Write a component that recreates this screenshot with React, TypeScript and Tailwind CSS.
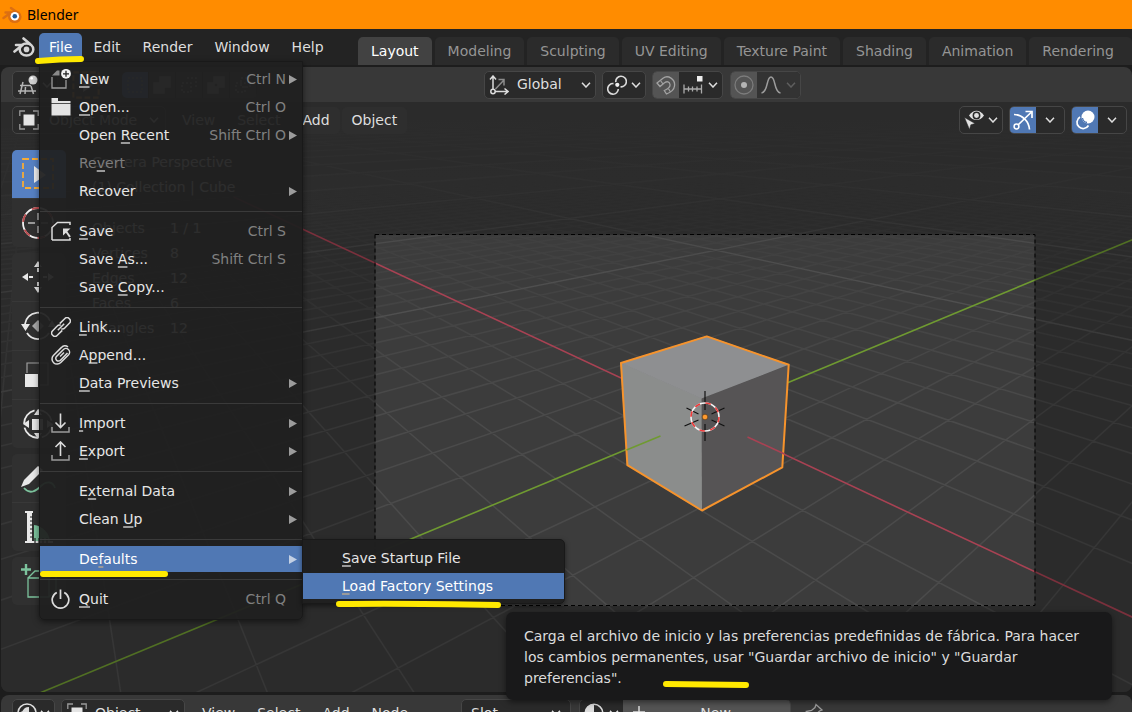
import type { ReactNode } from 'react';

/* ---------- viewport camera ---------- */

const CX = 704.5;
const CY = 420.5;
const FOCAL = 641;
const RIGHT = [0.6859, 0.7277, 0];
const UP = [-0.324, 0.3054, 0.8954];
const BACK = [0.6516, -0.6142, 0.4453];
const EYE = [7.3589, -6.9258, 4.9583];

const toCamera = (p: number[]) => {
  const d = p.map((v, i) => v - EYE[i]);
  const dot = (a: number[]) => a[0] * d[0] + a[1] * d[1] + a[2] * d[2];
  return [dot(RIGHT), dot(UP), -dot(BACK)];
};

const toScreen = ([x, y, depth]: number[]) => [CX + (FOCAL * x) / depth, CY - (FOCAL * y) / depth];

const lineBetween = (from: number[], to: number[]) => {
  let a = toCamera(from);
  let b = toCamera(to);
  const near = 1;
  if (a[2] < near && b[2] < near) return '';
  if (a[2] < near || b[2] < near) {
    const t = (near - a[2]) / (b[2] - a[2]);
    const cut = a.map((v, i) => v + (b[i] - v) * t);
    if (a[2] < near) a = cut;
    else b = cut;
  }
  const [x1, y1] = toScreen(a);
  const [x2, y2] = toScreen(b);
  return `M${x1.toFixed(1)} ${y1.toFixed(1)}L${x2.toFixed(1)} ${y2.toFixed(1)}`;
};

const gridPath = (count: number, step: number) => {
  const parts: string[] = [];
  const reach = count * step;
  for (let i = -count; i <= count; i++) {
    if (i === 0) continue;
    parts.push(lineBetween([i * step, -reach, 0], [i * step, reach, 0]));
    parts.push(lineBetween([-reach, i * step, 0], [reach, i * step, 0]));
  }
  return parts.join('');
};

const face = (points: number[][]) => points.map((p) => toScreen(toCamera(p)).map((v) => v.toFixed(1)).join(',')).join(' ');

const minorGrid = gridPath(50, 1);
const majorGrid = gridPath(20, 10);

const Scene = () => (
  <svg className="absolute inset-0 h-full w-full" viewBox="0 102 1132 590" preserveAspectRatio="xMidYMid slice" aria-hidden="true">
    <defs>
      <linearGradient id="fade" gradientUnits="userSpaceOnUse" x1="0" y1="102" x2="0" y2="420">
        <stop offset="0.1" stopColor="#525252" stopOpacity="0" />
        <stop offset="0.35" stopColor="#525252" stopOpacity="0.08" />
        <stop offset="0.55" stopColor="#525252" stopOpacity="0.28" />
        <stop offset="1" stopColor="#525252" stopOpacity="0.65" />
      </linearGradient>
      <linearGradient id="fadeMajor" gradientUnits="userSpaceOnUse" x1="0" y1="102" x2="0" y2="420">
        <stop offset="0.05" stopColor="#5a5a5a" stopOpacity="0" />
        <stop offset="0.3" stopColor="#5a5a5a" stopOpacity="0.18" />
        <stop offset="0.5" stopColor="#5a5a5a" stopOpacity="0.5" />
        <stop offset="1" stopColor="#5a5a5a" stopOpacity="0.6" />
      </linearGradient>
    </defs>
    <path d={minorGrid} stroke="url(#fade)" strokeWidth="1.5" fill="none" />
    <path d={majorGrid} stroke="url(#fadeMajor)" strokeWidth="1.3" fill="none" />
    <path d={lineBetween([-40, 0, 0], [40, 0, 0])} stroke="#a84253" strokeWidth="1.6" />
    <path d={lineBetween([0, -40, 0], [0, 40, 0])} stroke="#6f9a31" strokeWidth="1.6" />
    <path d="M0 102H1132V692H0ZM375 235V606H1034V235Z" fill="#000" fillOpacity="0.27" fillRule="evenodd" />
    <rect x="374.5" y="234.5" width="660" height="371" fill="none" stroke="#000" strokeDasharray="4 3" />

    {/* cube */}
    <g strokeWidth="0.8">
      <polygon points={face([[1, -1, 1], [-1, -1, 1], [-1, -1, -1], [1, -1, -1]])} fill="#8b8d8c" stroke="#8b8d8c" />
      <polygon points={face([[1, -1, 1], [1, 1, 1], [-1, 1, 1], [-1, -1, 1]])} fill="#8e8f91" stroke="#8e8f91" />
      <polygon points={face([[1, -1, 1], [1, 1, 1], [1, 1, -1], [1, -1, -1]])} fill="#565455" />
    </g>
    <polygon
      points={face([[-1, 1, 1], [1, 1, 1], [1, 1, -1], [1, -1, -1], [-1, -1, -1], [-1, -1, 1]])}
      fill="none"
      stroke="#f6932c"
      strokeWidth="2"
      strokeLinejoin="round"
    />
    <path d="M626 450L660 436" stroke="#6f9a31" strokeWidth="1.6" />
    <path d="M747 437L784 454" stroke="#a84253" strokeWidth="1.6" />

    {/* 3D cursor */}
    <path d="M704.5 391V410M704.5 424V441M686 408L698 414M684 426L698 420M724 408L711 414M724 426L711 420" stroke="#111" strokeWidth="1.2" />
    <circle cx="704.5" cy="417" r="14" fill="none" stroke="#f4f4f4" strokeWidth="1.6" />
    <circle cx="704.5" cy="417" r="14" fill="none" stroke="#ee3a3a" strokeWidth="1.6" strokeDasharray="5.5" />
    <circle cx="704.5" cy="417" r="2.8" fill="#ff9a2e" stroke="#4a2f10" strokeWidth="0.6" />
  </svg>
);

/* ---------- icons ---------- */

const Icon = ({ children, className = 'h-5 w-5' }: { children: ReactNode; className?: string }) => (
  <svg viewBox="0 0 20 20" className={`shrink-0 ${className}`} fill="none" stroke="#dcdcdc" strokeWidth="1.5" aria-hidden="true">
    {children}
  </svg>
);

const Chevron = ({ dim = false }: { dim?: boolean }) => (
  <svg viewBox="0 0 10 6" className="h-[6px] w-[10px] shrink-0" fill="none" stroke={dim ? '#5e5e5e' : '#dedede'} strokeWidth="1.5" aria-hidden="true">
    <path d="M1 .8L5 5L9 .8" />
  </svg>
);

const BlenderLogo = () => (
  <svg viewBox="0 0 22 20" className="h-5 w-[22px] shrink-0" fill="none" stroke="#d4d4d4" strokeLinecap="round" strokeLinejoin="round" aria-hidden="true">
    <path d="M1.500 14.500L9.500 8H3M10.500 1.500L17 7" strokeWidth="2.600" />
    <ellipse cx="13.500" cy="12.500" rx="6.800" ry="6.100" strokeWidth="2.500" />
    <circle cx="13.500" cy="12.400" r="2.800" fill="#d4d4d4" stroke="none" />
  </svg>
);

const NewIcon = () => (
  <Icon>
    <path d="M1 8V19H15V11" stroke="#9a9a9a" strokeWidth="1.3" />
    <path d="M1 6.5L6 1.5H8.5V6.5Z" fill="#8a8a8a" stroke="none" />
    <circle cx="15" cy="4.8" r="4.9" fill="#f0f0f0" stroke="none" />
    <path d="M15 1.8V7.8M12 4.8H18" stroke="#222" strokeWidth="1.3" />
  </Icon>
);
const FolderIcon = () => (
  <Icon>
    <path d="M.5 1H7V4H19.5V6.200H.5ZM.5 7H19.5V18.500H.5Z" fill="#e4e4e4" stroke="none" />
  </Icon>
);
const SaveIcon = () => (
  <Icon>
    <path d="M1 19V6.500L6.500 1.500H19V4M1 19H19V17" strokeWidth="1.500" />
    <path d="M12 7.500H19.500L12 14.500Z" fill="#dcdcdc" stroke="none" />
    <path d="M14.500 9.500L19 16" strokeWidth="2" />
  </Icon>
);
const LinkIcon = () => (
  <Icon>
    <g transform="rotate(-45 10 10)">
      <path d="M8.500 13.300H1.500A3.300 3.300 0 0 1 1.500 6.700H8A3 3 0 0 1 11 8.500" />
      <path d="M11.500 6.700H18.500A3.300 3.300 0 0 1 18.500 13.300H12A3 3 0 0 1 9 11.500" />
      <path d="M5.500 10H14.500" />
    </g>
  </Icon>
);
const ClipIcon = () => (
  <Icon>
    <path d="M16.500 8L9.500 15.200A2.700 2.700 0 0 1 5.500 11.500L12.200 4.700A3.600 3.600 0 0 1 17.600 9.700L9.800 17.500A5 5 0 0 1 2.400 10.500L10.500 2.400A4.500 4.500 0 0 1 17 2" />
    <path d="M9 11.500L13 7.500" />
  </Icon>
);
const ImportIcon = () => (
  <Icon>
    <path d="M1 14V19H18V14" stroke="#9a9a9a" />
    <path d="M9.500 .5V14M4.500 9.500L9.500 14.500L14.500 9.500" strokeWidth="1.600" />
  </Icon>
);
const ExportIcon = () => (
  <Icon>
    <path d="M1 14V19H18V14" stroke="#9a9a9a" />
    <path d="M9.500 15V1.500M4.500 6L9.500 1L14.500 6" strokeWidth="1.600" />
  </Icon>
);
const QuitIcon = () => (
  <Icon>
    <path d="M5.800 3.400A8.300 8.300 0 1 0 13.200 3.400M9.500 .5V10" strokeWidth="1.700" />
  </Icon>
);

const ViewportIcon = () => (
  <Icon>
    <path d="M5 7L2 19M13 11L15.500 19M2 10.500H13M0 16H18M7.500 12L7 19" stroke="#b4b4b4" />
    <circle cx="15" cy="5" r="4.500" fill="#cfcfcf" stroke="none" />
    <circle cx="13.700" cy="3.300" r="1.300" fill="#fff" stroke="none" />
  </Icon>
);
const ObjectModeIcon = () => (
  <Icon>
    <path d="M.8 6V1H6M14 1H19.200V6M19.200 14V19H14M6 19H.8V14" stroke="#9a9a9a" strokeWidth="1.300" />
    <rect x="4.500" y="4.500" width="11" height="11" fill="#e4e4e4" stroke="none" />
  </Icon>
);
const AxesIcon = () => (
  <Icon>
    <path d="M4 14V1.500M1 4.500L4 1L7 4.500M6 16.500H18.500M15.500 13.500L19 16.500L15.500 19.500" />
    <circle cx="4" cy="16.500" r="2.200" />
    <path d="M6.500 14L14.500 5.500M9.500 4.500H15V10.500" stroke="#8c8c8c" />
  </Icon>
);
const PivotIcon = () => (
  <Icon>
    <path d="M8.800 7.200A5.300 5.300 0 1 1 13.500 11.800M6.500 8.600A5.300 5.300 0 1 0 11.300 14" strokeWidth="1.600" />
    <circle cx="10.300" cy="9.800" r="2.100" fill="#f2f2f2" stroke="none" />
  </Icon>
);
const MagnetIcon = () => (
  <Icon>
    <path
      d="M1 8L7 3.200C12 -.5 19.500 4 18.500 11C18 16 13 18 10.500 19L8.300 15.500C12 14 14.500 12.500 14 9.500C13.500 6.500 11 6 8.500 7.800L4 11.500Z"
      stroke="#a2a2a2"
      strokeWidth="1.300"
    />
    <path d="M4.500 5.500L7 9M12.500 13.800L14.500 17" stroke="#a2a2a2" strokeWidth="1.200" />
  </Icon>
);
const IncrementIcon = () => (
  <Icon>
    <path d="M1 9.500V18.500M18.500 9.500V18.500M1 14H18.500M5.500 11.500V16.500M9.500 11.500V16.500M14 11.500V16.500" stroke="#ababab" strokeWidth="1.300" />
    <rect x="14" y="1" width="5.500" height="5.500" fill="#eee" stroke="none" />
  </Icon>
);
const ProportionalIcon = () => (
  <Icon>
    <circle cx="10" cy="10" r="9" stroke="#7c7c7c" strokeWidth="1.300" />
    <circle cx="10" cy="10" r="3" fill="#b4b4b4" stroke="none" />
  </Icon>
);
const FalloffIcon = () => (
  <Icon>
    <path d="M.5 18C7.500 17 5 2 10 2S12.500 17 19.500 18" stroke="#9c9c9c" />
  </Icon>
);
const VisibilityIcon = () => (
  <Icon>
    <path d="M5 5.500C9 -.8 16 -.8 20 5.500C16 11.500 9 11.500 5 5.500Z" fill="#e2e2e2" stroke="none" />
    <circle cx="12.500" cy="5.500" r="3.200" fill="#e2e2e2" stroke="#2a2a2a" strokeWidth="1.500" />
    <path d="M.5 7.500L11 13.500L6.800 14.800L5.500 19.500Z" fill="#e2e2e2" stroke="#2a2a2a" strokeWidth=".5" />
  </Icon>
);
const GizmoIcon = () => (
  <Icon>
    <g stroke="#fff">
      <path d="M1 4.500C9 4.500 16 11 16.500 19.500M5.500 14.500L18 2.500M12.500 1.500H19V8" strokeWidth="1.700" />
      <circle cx="3.500" cy="16.500" r="2.400" />
    </g>
  </Icon>
);
const OverlayIcon = () => (
  <Icon>
    <circle cx="13" cy="7" r="6.500" fill="#fff" stroke="none" />
    <path d="M5 7A6.200 6.200 0 1 0 13.500 15.500" stroke="#fff" strokeWidth="1.700" />
    <path d="M7.500 8A5.500 5.500 0 0 0 12 12.500" stroke="#5078b4" strokeWidth="1.300" />
  </Icon>
);
const ShaderIcon = () => (
  <Icon>
    <circle cx="10" cy="10" r="9" />
    <path d="M3 15C3 8 7 4 12 4V9C8 10 8 14 8 18Z" fill="#dcdcdc" stroke="none" />
    <path d="M4.500 8L7 4.500" stroke="#2c2c2c" />
  </Icon>
);
const MaterialIcon = () => (
  <Icon>
    <circle cx="10" cy="10" r="8.700" />
    <path d="M10 1A9 9 0 0 0 10 19Z" fill="#dcdcdc" stroke="none" />
  </Icon>
);
const PinIcon = () => (
  <Icon>
    <path d="M13 1.500L19 7L16.500 8L12.500 12L11.500 16L7.500 12L3.500 8.500L8.500 7.500L12 4.500ZM7.500 12L1 19" stroke="#9a9a9a" strokeWidth="1.300" />
  </Icon>
);

const ToolIcon = ({ children }: { children: ReactNode }) => (
  <svg viewBox="0 0 54 48" className="h-12 w-[54px]" fill="none" stroke="#e8e8e8" strokeWidth="1.800" aria-hidden="true">
    {children}
  </svg>
);

const toolGroups: { name: string; icon: ReactNode }[][] = [
  [
    {
      name: 'Select Box',
      icon: (
        <>
          <rect x="11" y="9" width="30" height="29" stroke="#f5ab38" strokeDasharray="6 3" />
          <path d="M22 16V33L34 25Z" fill="#ececec" stroke="none" />
        </>
      ),
    },
    {
      name: 'Cursor',
      icon: (
        <>
          <circle cx="26" cy="24" r="15" stroke="#f2f2f2" />
          <circle cx="26" cy="24" r="15" stroke="#b84a4e" strokeDasharray="8" />
          <path d="M16 24H23M29 24H36M26 14V21M26 27V34" stroke="#9a9a9a" />
        </>
      ),
    },
  ],
  [
    {
      name: 'Move',
      icon: (
        <>
          <path d="M10 24L16 20V28ZM42 24L36 20V28ZM26 8L22 14H30ZM26 40L22 34H30Z" fill="#e8e8e8" stroke="none" />
          <path d="M17 24H21M31 24H35M26 15V19M26 29V33" />
        </>
      ),
    },
    {
      name: 'Rotate',
      icon: (
        <>
          <path d="M13 22A13 13 0 0 1 38 19M15 31A13 13 0 0 0 37 31" />
          <path d="M9 22H18L13.500 29ZM36 25L40 18L44 25Z" fill="#e8e8e8" stroke="none" />
          <path d="M26 18L20 24L26 30L32 24Z" fill="#a8a8a8" stroke="none" />
        </>
      ),
    },
    {
      name: 'Scale',
      icon: (
        <>
          <path d="M15 22V12H36V34H27" stroke="#a0a0a0" strokeWidth="1.200" />
          <rect x="13" y="23" width="13" height="13" fill="#e8e8e8" stroke="none" />
        </>
      ),
    },
    {
      name: 'Transform',
      icon: (
        <>
          <circle cx="26" cy="24" r="14" strokeDasharray="18 4" />
          <path d="M11 24L17 20V28ZM41 24L35 20V28ZM26 9L22 15H30ZM26 39L22 33H30Z" fill="#e8e8e8" stroke="none" />
          <rect x="20" y="19" width="11" height="11" fill="#e8e8e8" stroke="none" />
        </>
      ),
    },
  ],
  [
    {
      name: 'Annotate',
      icon: (
        <>
          <path d="M12 34C18 41 24 37 29 32S41 27 43 34" stroke="#7cc39d" />
          <path d="M9 33L12 26L26 12L31 16L17 30Z" fill="#e8e8e8" stroke="none" />
        </>
      ),
    },
    {
      name: 'Measure',
      icon: (
        <>
          <path d="M22 22A18 18 0 0 1 38 38H22Z" fill="#7cc39d" stroke="none" />
          <path d="M13 8H21V10H20V38H41V40H13V38H15V10H13Z" fill="#e8e8e8" stroke="none" />
          <path d="M18 14H21M18 18H21M18 22H21M18 26H21M18 30H21M18 34H21M23 35V40M27 35V40M31 35V40M35 35V40" stroke="#1e1e1e" strokeWidth="1.200" />
        </>
      ),
    },
  ],
  [
    {
      name: 'Add Cube',
      icon: (
        <g stroke="#7cc39d">
          <path d="M16 21H37V40H16ZM16 21L23 14H44V33L37 40M37 21L44 14" strokeWidth="1.300" />
          <path d="M14 7V18M9 12.500H19" strokeWidth="2.400" />
        </g>
      ),
    },
  ],
];

const selectModes = [
  'M3 3H17V17H3Z',
  'M2 8H8V2H18V12H12V18H2Z',
  'M3 8H12V17H3ZM8 3H17V12',
  'M2 8H8V2H18V12H12V18H2ZM8 8H12V12H8Z',
  'M3 8H12V17H3ZM8 3H17V12H8Z',
];

/* ---------- file menu ---------- */

type Item = { label: string; key?: string; shortcut?: string; sub?: boolean; icon?: ReactNode; disabled?: boolean; active?: boolean };

const fileMenu: Item[][] = [
  [
    { label: 'New', key: 'N', shortcut: 'Ctrl N', sub: true, icon: <NewIcon /> },
    { label: 'Open...', key: 'O', shortcut: 'Ctrl O', icon: <FolderIcon /> },
    { label: 'Open Recent', key: 'R', shortcut: 'Shift Ctrl O', sub: true },
    { label: 'Revert', key: 'v', disabled: true },
    { label: 'Recover', sub: true },
  ],
  [
    { label: 'Save', key: 'S', shortcut: 'Ctrl S', icon: <SaveIcon /> },
    { label: 'Save As...', key: 'A', shortcut: 'Shift Ctrl S' },
    { label: 'Save Copy...', key: 'C' },
  ],
  [
    { label: 'Link...', key: 'L', icon: <LinkIcon /> },
    { label: 'Append...', key: 'p', icon: <ClipIcon /> },
    { label: 'Data Previews', key: 'D', sub: true },
  ],
  [
    { label: 'Import', key: 'I', sub: true, icon: <ImportIcon /> },
    { label: 'Export', key: 'E', sub: true, icon: <ExportIcon /> },
  ],
  [
    { label: 'External Data', key: 'x', sub: true },
    { label: 'Clean Up', key: 'U', sub: true },
  ],
  [{ label: 'Defaults', key: 'f', sub: true, active: true }],
  [{ label: 'Quit', key: 'Q', shortcut: 'Ctrl Q', icon: <QuitIcon /> }],
];

const Mnemonic = ({ label, char }: { label: string; char?: string }) => {
  if (!char) return <>{label}</>;
  const at = label.indexOf(char);
  return (
    <>
      {label.slice(0, at)}
      <span className="underline decoration-[#9a9a9a] decoration-2 underline-offset-2 [text-decoration-skip-ink:none]">{char}</span>
      {label.slice(at + 1)}
    </>
  );
};

const SubMenu = () => (
  <div className="absolute -top-[6px] left-full w-[263px] rounded-r-[5px] border border-[#191919] bg-[#202020]/98 pt-1 pb-[3px] shadow-[0_2px_5px_rgba(0,0,0,0.5)]">
    <button className="flex h-7 w-full items-center pl-[39px]"><span><Mnemonic label="Save Startup File" char="S" /></span></button>
    <div className="py-px">
      <button className="flex h-[26px] w-full items-center bg-[#5078b4] pl-[39px] text-white"><span><Mnemonic label="Load Factory Settings" char="L" /></span></button>
    </div>
  </div>
);

const MenuRow = ({ item }: { item: Item }) => (
  <div className="relative py-px">
    <button disabled={item.disabled} className={`flex h-[26px] w-full items-center pr-1 pl-[11px] ${item.active ? 'bg-[#5078b4] text-white' : item.disabled ? 'text-[#7d7d7d]' : ''}`}>
      <span className="w-7">{item.icon}</span>
      <span><Mnemonic label={item.label} char={item.key} /></span>
      <span className="ml-auto text-[#808080]">{item.shortcut}</span>
      <span className="flex w-3 justify-end">
        {item.sub && (
          <svg viewBox="0 0 8 8" className="mr-px h-[9px] w-2" preserveAspectRatio="none" aria-hidden="true"><path d="M0 0L8 4L0 8Z" fill={item.active ? '#c3d0e4' : '#9c9c9c'} /></svg>
        )}
      </span>
    </button>
    {item.active && <SubMenu />}
  </div>
);

const FileMenu = () => (
  <div className="absolute top-full left-0 z-20 w-[264px] rounded-b-[5px] border border-[#191919] bg-[#202020]/94 pt-[3px] pb-[6px] text-[#e6e6e6] shadow-[0_2px_6px_rgba(0,0,0,0.5)]">
    {fileMenu.map((group, i) => (
      <div key={i}>
        {i > 0 && <div className="flex h-3 items-center"><hr className="w-full border-[#3a3a3a]" /></div>}
        {group.map((item) => <MenuRow key={item.label} item={item} />)}
      </div>
    ))}
  </div>
);

/* ---------- bars ---------- */

const workspaces = ['Layout', 'Modeling', 'Sculpting', 'UV Editing', 'Texture Paint', 'Shading', 'Animation', 'Rendering'];

const TopBar = () => (
  <header className="flex h-9 shrink-0 bg-[#232323]">
    <nav className="flex w-[358px] shrink-0 items-start pt-1 pl-[13px]">
      <button className="flex h-7 w-[26px] items-center" aria-label="Blender"><BlenderLogo /></button>
      <div className="relative">
        <button className="h-7 rounded-t-[5px] bg-[#5078b4] px-[10px] text-white">File</button>
        <FileMenu />
      </div>
      {['Edit', 'Render', 'Window', 'Help'].map((name) => (
        <button key={name} className="h-7 px-[11px] text-[#dedede]">{name}</button>
      ))}
    </nav>
    <div className="flex min-w-0 flex-1 items-end gap-[3px] overflow-hidden">
      {workspaces.map((name, i) => (
        <button key={name} className={`h-7 shrink-0 rounded-t-[5px] px-[13px] last:grow last:text-left ${i === 0 ? 'bg-[#424242] text-white' : 'bg-[#2b2b2b] text-[#959595]'}`}>{name}</button>
      ))}
    </div>
  </header>
);

const box = 'flex h-7 items-center rounded-[5px] border border-[#464646] bg-[#2a2a2a]';

const ToolHeader = () => (
  <div className="flex h-[35px] shrink-0 items-center rounded-t-lg bg-[#383838] pl-[11px]">
    <div className="flex w-[472px] items-center">
      <button className={`${box} w-[46px] justify-between px-[5px]`} aria-label="Editor type"><ViewportIcon /><Chevron /></button>
      <button className="ml-3 flex h-7 w-8 items-center justify-center" aria-label="Active tool">
        <Icon className="h-7 w-7"><rect x="1" y="1" width="18" height="18" stroke="#d08f35" strokeDasharray="4 2" /><path d="M8 5V15L15 10Z" fill="#ddd" stroke="none" /></Icon>
      </button>
      <div className="ml-5 flex h-[26px] overflow-hidden rounded-[5px]">
        {selectModes.map((d, i) => (
          <button key={i} aria-label={`Select mode ${i + 1}`} className={`flex w-[27px] items-center justify-center border-r border-[#2e2e2e] ${i === 0 ? 'bg-[#5078b4]' : 'bg-[#4a4a4a]'}`}>
            <Icon><path d={d} fillRule="evenodd" fill={i % 2 ? '#999' : 'none'} stroke="#999" strokeDasharray={i % 2 ? undefined : '2'} /></Icon>
          </button>
        ))}
      </div>
    </div>
    <div className="flex">
      <button className={`${box} w-[112px] px-1`}><AxesIcon /><span className="ml-2 flex-1 text-left">Global</span><Chevron /></button>
      <button className={`${box} ml-[6px] w-11 justify-between px-1`} aria-label="Pivot point"><PivotIcon /><Chevron /></button>
      <div className={`${box} ml-[6px] overflow-hidden`}>
        <button className="flex h-full w-[26px] items-center justify-center bg-[#545454]" aria-label="Snap"><MagnetIcon /></button>
        <button className="flex h-full w-[43px] items-center justify-between px-1" aria-label="Snapping"><IncrementIcon /><Chevron /></button>
      </div>
      <div className={`${box} ml-[7px] overflow-hidden`}>
        <button className="flex h-full w-[26px] items-center justify-center bg-[#545454]" aria-label="Proportional editing"><ProportionalIcon /></button>
        <button className="flex h-full w-[43px] items-center justify-between bg-[#333333] px-1" aria-label="Falloff"><FalloffIcon /><Chevron dim /></button>
      </div>
    </div>
  </div>
);

const ViewHeader = () => (
  <div className="relative flex h-9 items-center pr-[5px] pl-[11px]">
    <button className={`${box} mr-[6px] w-[154px] px-[6px]`}><ObjectModeIcon /><span className="ml-[10px] flex-1 text-left">Object Mode</span><Chevron /></button>
    {['View', 'Select', 'Add', 'Object'].map((name) => (
      <button key={name} className="mr-[2px] h-[27px] rounded-[5px] bg-[#2e2e2e] px-[10px]">{name}</button>
    ))}
    <div className="ml-auto flex gap-[6px]">
      <button className={`${box} w-11 justify-between px-1`} aria-label="Visibility"><VisibilityIcon /><Chevron /></button>
      <div className={`${box} overflow-hidden`}>
        <button className="flex h-full w-[26px] items-center justify-center bg-[#5078b4]" aria-label="Gizmos"><GizmoIcon /></button>
        <button className="flex h-full w-7 items-center justify-center" aria-label="Gizmo options"><Chevron /></button>
      </div>
      <div className={`${box} overflow-hidden`}>
        <button className="flex h-full w-[26px] items-center justify-center bg-[#5078b4]" aria-label="Overlays"><OverlayIcon /></button>
        <button className="flex h-full w-7 items-center justify-center" aria-label="Overlay options"><Chevron /></button>
      </div>
    </div>
  </div>
);

const stats = [['Objects', '1 / 1'], ['Vertices', '8'], ['Edges', '12'], ['Faces', '6'], ['Triangles', '12']];

const Viewport = () => (
  <main className="relative min-h-0 flex-1 overflow-hidden rounded-b-lg bg-[#3c3c3c]">
    <Scene />
    <ViewHeader />
    <div className="relative flex pt-3 pl-[11px]">
      <div className="flex flex-col gap-[6px]">
        {toolGroups.map((group, i) => (
          <div key={i} className="divide-y divide-[#383838] overflow-hidden rounded-[5px] bg-[#303030]">
            {group.map((tool, j) => (
              <button key={tool.name} aria-label={tool.name} className={`block ${i + j === 0 ? 'bg-[#5680c2]' : ''}`}><ToolIcon>{tool.icon}</ToolIcon></button>
            ))}
          </div>
        ))}
      </div>
      <div className="pl-[26px] leading-[25px] text-white">
        <p>Camera Perspective</p>
        <p>(1) Collection | Cube</p>
        <table className="mt-4">
          <tbody>
            {stats.map(([name, value]) => (
              <tr key={name}><td className="w-[78px] p-0">{name}</td><td className="p-0">{value}</td></tr>
            ))}
          </tbody>
        </table>
      </div>
    </div>
  </main>
);

const NodeHeader = () => (
  <footer className="mt-[3px] ml-px flex h-[17px] shrink-0 items-start overflow-hidden rounded-t-lg bg-[#383838] pt-1 pl-[11px]">
    <button className={`${box} w-[43px] justify-between px-1`} aria-label="Shader editor"><ShaderIcon /><Chevron /></button>
    <button className={`${box} mr-[7px] ml-[6px] w-[124px] px-[5px]`}><ObjectModeIcon /><span className="ml-2 flex-1 text-left">Object</span><Chevron /></button>
    {['View', 'Select', 'Add', 'Node'].map((name) => (
      <button key={name} className="mr-[2px] h-7 px-[10px]">{name}</button>
    ))}
    <button className={`${box} ml-[41px] w-[110px] px-[9px]`}><span className="flex-1 text-left">Slot</span><Chevron /></button>
    <div className={`${box} ml-2 overflow-hidden`}>
      <button className="flex h-full w-[43px] items-center justify-between px-1" aria-label="Material"><MaterialIcon /><Chevron /></button>
      <button className="flex h-full w-[167px] items-center bg-[#545454] pl-[6px]">
        <Icon><path d="M10 3V15M4 9H16" /></Icon>
        <span className="flex-1 pr-2 text-center">New</span>
      </button>
    </div>
    <button className="ml-3 flex h-7 items-center" aria-label="Pin"><PinIcon /></button>
  </footer>
);

const Tooltip = () => (
  <div role="tooltip" className="absolute right-5 bottom-3 z-30 w-[606px] rounded-[7px] bg-[#19191a] px-[18px] pt-[14px] pb-[11px] leading-[21px] text-[#dcdcdc] shadow-[0_2px_6px_rgba(0,0,0,0.5)]">
    Carga el archivo de inicio y las preferencias predefinidas de fábrica. Para hacer los cambios permanentes, usar "Guardar archivo de inicio" y "Guardar preferencias".
  </div>
);

// highlighter strokes drawn over the window
const Marks = () => (
  <svg className="pointer-events-none absolute top-0 left-0 z-40 h-[712px] w-[1132px]" fill="none" stroke="#ffe900" strokeWidth="6" strokeLinecap="round" aria-hidden="true">
    <path d="M38 61Q60 59 81 59" />
    <path d="M43 574H165" />
    <path d="M339 604Q400 603 498 605" />
    <path d="M666 684L746 685" />
  </svg>
);

export default function App() {
  return (
    <div className="relative flex h-screen flex-col overflow-hidden bg-[#1d1d1d] font-['DejaVu_Sans',sans-serif] text-[14px] text-[#dedede]">
      <div className="flex h-[29px] shrink-0 items-center bg-[#ff8c00] pl-[2px] font-['Noto_Sans',sans-serif] text-black">
        <svg viewBox="0 0 20 18" className="mr-[5px] h-[18px] w-5" aria-hidden="true">
          <path d="M1.500 12L9 6.500M3.500 6.500H12M9 2L16 7" stroke="#dc6f12" strokeWidth="2.400" strokeLinecap="round" />
          <ellipse cx="12.800" cy="10.700" rx="6.800" ry="6.300" fill="#dc6f12" />
          <circle cx="12.800" cy="10.200" r="4.300" fill="#fff" />
          <circle cx="12.800" cy="10.200" r="2.300" fill="#1f5a96" />
        </svg>
        Blender
      </div>
      <TopBar />
      <div className="mt-[2px] ml-px flex min-h-0 flex-1 flex-col">
        <ToolHeader />
        <Viewport />
      </div>
      <NodeHeader />
      <Tooltip />
      <Marks />
    </div>
  );
}
